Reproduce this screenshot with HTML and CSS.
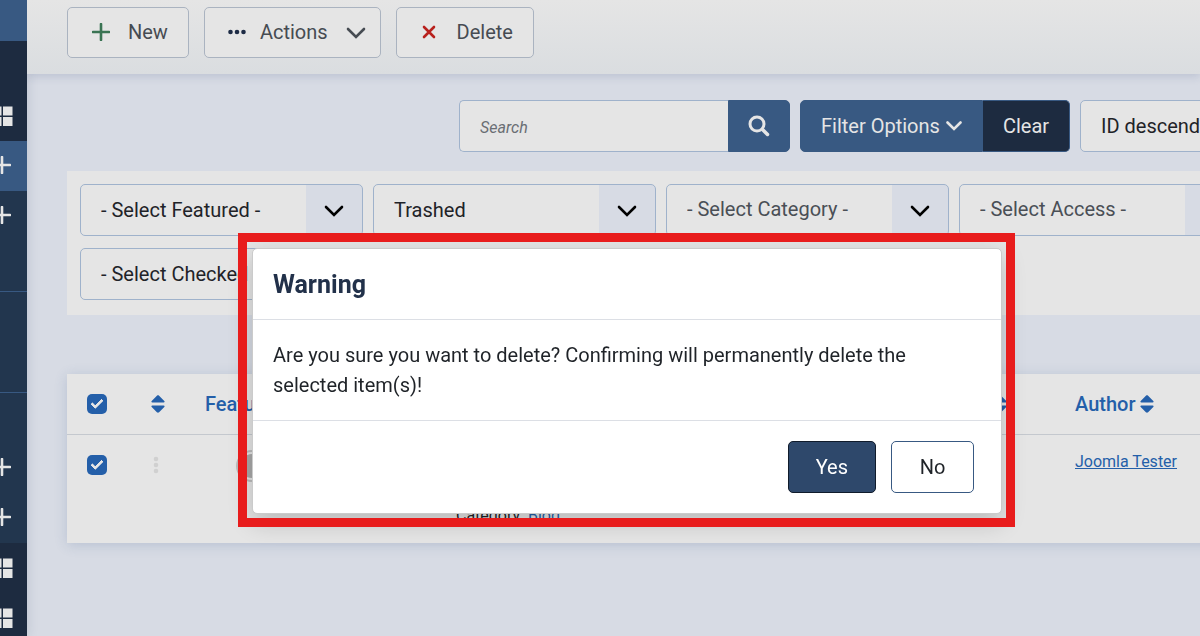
FILE: index.html
```html
<!DOCTYPE html>
<html lang="en">
<head>
    <meta charset="UTF-8">
    <meta name="viewport" content="width=device-width, initial-scale=1.0">
    <title>Articles</title>
    <link rel="stylesheet" href="styles.css">
</head>
<body>
    <!-- shared icons -->
    <svg class="sprite" width="0" height="0" aria-hidden="true">
        <symbol id="grid" viewBox="0 0 20 20">
            <path d="M0 .5h8.500V9.500H0zM10 .5h9.500v9H10zM0 11h8.500v9H0zM10 11h9.500v9H10z" fill="currentColor"/>
        </symbol>
        <symbol id="plus" viewBox="0 0 18 18">
            <path d="M9 1v16M1 9h16" fill="none" stroke="currentColor" stroke-width="2.600" stroke-linecap="round"/>
        </symbol>
        <symbol id="chevron" viewBox="0 0 20 12">
            <path d="M2 2l8 8 8-8" fill="none" stroke="currentColor" stroke-width="2.600" stroke-linecap="round"/>
        </symbol>
        <symbol id="sort" viewBox="0 0 14 18">
            <path d="M1.300 7.500h11.400c.9 0 1.200-.9.6-1.500L8.100.8C7.400.2 6.600.2 5.900.8L.7 6c-.6.6-.3 1.500.6 1.500zM1.300 10.500h11.400c.9 0 1.200.9.6 1.500l-5.200 5.200c-.7.6-1.500.6-2.200 0L.7 12c-.6-.6-.3-1.500.6-1.500z" fill="currentColor"/>
        </symbol>
    </svg>

    <div class="wrapper">
        <nav class="sidebar" aria-label="Main menu">
            <div class="side-head"></div>
            <div class="side-item dark"></div>
            <div class="side-item dark"><svg class="icon-grid"><use href="#grid"/></svg></div>
            <div class="side-item active"><svg class="icon-plus"><use href="#plus"/></svg></div>
            <div class="side-item"><svg class="icon-plus"><use href="#plus"/></svg></div>
            <div class="side-item"></div>
            <hr>
            <div class="side-item"></div>
            <div class="side-item"></div>
            <hr>
            <div class="side-item"></div>
            <div class="side-item"><svg class="icon-plus"><use href="#plus"/></svg></div>
            <div class="side-item"><svg class="icon-plus"><use href="#plus"/></svg></div>
            <div class="side-item dark"><svg class="icon-grid"><use href="#grid"/></svg></div>
            <div class="side-item dark"><svg class="icon-grid"><use href="#grid"/></svg></div>
        </nav>

        <main class="main">
            <div class="toolbar">
                <button class="tool" type="button">
                    <span class="tool-icon green"><svg width="18" height="18"><use href="#plus"/></svg></span>
                    New
                </button>
                <button class="tool tool-actions" type="button">
                    <span class="tool-icon navy">
                        <svg width="18" height="6" viewBox="0 0 18 6"><circle cx="2.500" cy="3" r="2.300"/><circle cx="9" cy="3" r="2.300"/><circle cx="15.500" cy="3" r="2.300"/></svg>
                    </span>
                    Actions
                    <svg class="chevron" width="20" height="12"><use href="#chevron"/></svg>
                </button>
                <button class="tool" type="button">
                    <span class="tool-icon red">
                        <svg width="14" height="14" viewBox="0 0 14 14"><path d="M2 2l10 10M12 2L2 12" fill="none" stroke="currentColor" stroke-width="2.600" stroke-linecap="round"/></svg>
                    </span>
                    Delete
                </button>
            </div>

            <div class="content">
                <div class="search-row">
                    <div class="group">
                        <input class="search" type="text" placeholder="Search" aria-label="Search">
                        <button class="btn btn-search" type="button" aria-label="Search">
                            <svg width="22" height="22" viewBox="0 0 22 22"><circle cx="9" cy="9" r="7" fill="none" stroke="currentColor" stroke-width="3"/><path d="M14.500 14.500l5 5" stroke="currentColor" stroke-width="3.500" stroke-linecap="round"/></svg>
                        </button>
                    </div>
                    <div class="group">
                        <button class="btn btn-filter" type="button">Filter Options
                            <svg width="16" height="10" viewBox="0 0 16 10"><path d="M1.500 1.500L8 8l6.500-6.500" fill="none" stroke="currentColor" stroke-width="2.600" stroke-linecap="round"/></svg>
                        </button>
                        <button class="btn btn-clear" type="button">Clear</button>
                    </div>
                    <select class="field order" aria-label="Sort by"><option>ID descending</option></select>
                </div>

                <div class="filters">
                    <div class="select">
                        <select class="field" aria-label="Featured"><option>- Select Featured -</option></select>
                        <svg><use href="#chevron"/></svg>
                    </div>
                    <div class="select">
                        <select class="field" aria-label="Status"><option>Trashed</option></select>
                        <svg><use href="#chevron"/></svg>
                    </div>
                    <div class="select">
                        <select class="field muted" aria-label="Category"><option>- Select Category -</option></select>
                        <svg><use href="#chevron"/></svg>
                    </div>
                    <div class="select">
                        <select class="field muted" aria-label="Access"><option>- Select Access -</option></select>
                        <svg><use href="#chevron"/></svg>
                    </div>
                    <div class="select">
                        <select class="field" aria-label="Checked out"><option>- Select Checked Out -</option></select>
                        <svg><use href="#chevron"/></svg>
                    </div>
                </div>

                <table class="articles">
                    <thead>
                        <tr>
                            <th class="col-check"><input type="checkbox" aria-label="Check all" checked></th>
                            <th class="col-order"><svg class="sort"><use href="#sort"/></svg></th>
                            <th class="col-featured">Featured</th>
                            <th class="col-title"></th>
                            <th class="col-access"><svg class="sort"><use href="#sort"/></svg></th>
                            <th>Author <svg class="sort"><use href="#sort"/></svg></th>
                        </tr>
                    </thead>
                    <tbody>
                        <tr>
                            <td class="col-check"><input type="checkbox" aria-label="Select article" checked></td>
                            <td class="col-order"><svg class="handle" width="6" height="18" viewBox="0 0 6 18"><circle cx="3" cy="3" r="2.300"/><circle cx="3" cy="9" r="2.300"/><circle cx="3" cy="15" r="2.300"/></svg></td>
                            <td class="featured"><svg width="32" height="32" viewBox="0 0 32 32"><circle cx="16" cy="16" r="15" fill="none" stroke="#bbbbbb" stroke-width="2"/><circle cx="16" cy="16" r="12" fill="#a9a9a9"/></svg></td>
                            <td class="title">Category: <a href="#">Blog</a></td>
                            <td></td>
                            <td class="author"><a href="#">Joomla Tester</a></td>
                        </tr>
                    </tbody>
                </table>
            </div>
        </main>
    </div>

    <div class="modal" role="dialog" aria-labelledby="modal-title">
        <header class="modal-header"><h3 id="modal-title">Warning</h3></header>
        <div class="modal-body">Are you sure you want to delete? Confirming will permanently delete the selected item(s)!</div>
        <footer class="modal-footer">
            <button class="modal-btn yes" type="button">Yes</button>
            <button class="modal-btn" type="button">No</button>
        </footer>
    </div>
</body>
</html>
```

FILE: styles.css
```css
*, *::before, *::after {
    box-sizing: border-box;
}
body {
    margin: 0;
    height: 100vh;
    overflow: hidden;
    background: #d7dbe4;
    font-family: Roboto, "Liberation Sans", sans-serif;
    font-size: 20px;
    line-height: 30px;
    color: #1f2328;
}
button, input, select {
    font: inherit;
    color: inherit;
}
a {
    color: #245fa9;
}
svg {
    flex: none;
}
.sprite {
    position: absolute;
}
.wrapper {
    display: flex;
    min-height: 100vh;
}

/* Sidebar */
.sidebar {
    flex: none;
    width: 27px;
    height: 100vh;
    overflow: hidden;
    background: #22364e;
    color: #e5e5e5;
    box-shadow: 0 0 12px rgba(30, 50, 90, 0.15);
}
.side-head {
    height: 41px;
    background: #385982;
}
.side-item {
    display: flex;
    justify-content: flex-end;
    align-items: center;
    height: 50px;
}
.side-item.dark {
    background: #1d2b40;
}
.side-item.active {
    background: #385982;
}
.sidebar hr {
    height: 1px;
    margin: 0;
    border: none;
    background: #385982;
}
.icon-grid {
    width: 20px;
    height: 20px;
    margin-right: 14px;
}
.icon-plus {
    width: 18px;
    height: 18px;
    margin: 0 16px 2px 0;
}

/* Toolbar */
.main {
    flex: 1;
    min-width: 0;
    overflow: hidden;
}
.toolbar {
    display: flex;
    gap: 15px;
    padding: 7px 40px 16px;
    background: linear-gradient(#e5e5e5, #dadde0);
    box-shadow: 0 3px 8px rgba(50, 70, 120, 0.15);
}
.tool {
    display: flex;
    align-items: center;
    gap: 15px;
    height: 51px;
    padding: 0 20px 2px;
    border: 1px solid #aab3c0;
    border-radius: 5px;
    background: #e5e5e5;
    color: #464b52;
}
.tool-actions {
    gap: 10px;
    padding-right: 14px;
}
.tool-icon {
    display: flex;
    justify-content: center;
    width: 25px;
}
.tool .chevron {
    margin: 3px 0 0 8px;
}
.green {
    color: #3a7453;
}
.navy {
    fill: #1d2b45;
}
.red {
    color: #b8211d;
}

/* Search row */
.content {
    margin-right: -80px;
    padding: 26px 0 0 40px;
}
.search-row {
    display: flex;
    justify-content: flex-end;
    gap: 10px;
    margin-bottom: 19px;
}
.group {
    display: flex;
}
.search {
    width: 269px;
    height: 52px;
    padding: 2px 20px 0;
    border: 1px solid #9fb2cb;
    border-right: none;
    border-radius: 5px 0 0 5px;
    background: #e5e5e5;
    font-size: 16px;
}
.search::placeholder {
    color: #6a6e74;
    font-style: italic;
}
.btn {
    display: flex;
    align-items: center;
    height: 52px;
    padding: 0 20px;
    border: 1px solid #385982;
    background: #385982;
    color: #e5e5e5;
    white-space: nowrap;
}
.btn-search {
    justify-content: center;
    width: 62px;
    border-radius: 0 5px 5px 0;
}
.btn-filter {
    gap: 6px;
    width: 183px;
    border-radius: 5px 0 0 5px;
}
.btn-clear {
    justify-content: center;
    width: 87px;
    border-left: none;
    border-radius: 0 5px 5px 0;
    background: #1d2b40;
}
.field {
    width: 100%;
    height: 52px;
    padding: 0 60px 0 20px;
    border: 1px solid #9fb2cb;
    border-radius: 5px;
    background: linear-gradient(#d7dbe4, #d7dbe4) right / 56px 100% no-repeat #e5e5e5;
    appearance: none;
}
.order {
    width: 200px;
    padding-right: 20px;
    background: #e5e5e5;
}
.muted {
    padding-bottom: 2px;
    color: #4a4f56;
}

/* Filters */
.filters {
    display: grid;
    grid-template-columns: repeat(4, 283px);
    gap: 12px 10px;
    padding: 13px 13px 15px;
    background: #e5e5e5;
}
.select {
    position: relative;
    height: 52px;
}
.select svg {
    position: absolute;
    top: 21px;
    right: 19px;
    width: 20px;
    height: 12px;
    color: #000;
    pointer-events: none;
}

/* Articles */
.articles {
    width: 100%;
    margin-top: 59px;
    border-spacing: 0;
    table-layout: fixed;
    background: #e5e5e5;
    box-shadow: 0 2px 12px rgba(60, 90, 140, 0.2);
}
.articles th {
    height: 61px;
    padding: 0 0 0 15px;
    border-bottom: 1px solid #c4c8ce;
    text-align: left;
    font-weight: 500;
    color: #245fa9;
}
.articles td {
    height: 108px;
    padding: 15px 0 0 15px;
    vertical-align: top;
}
.articles .col-check {
    width: 60px;
    padding-left: 20px;
}
.articles .col-order {
    width: 63px;
    padding-left: 24px;
}
.col-featured {
    width: 251px;
}
.col-title {
    width: 544px;
}
.articles .col-access {
    width: 75px;
    padding-left: 8px;
}
.articles input {
    display: block;
    width: 20px;
    height: 20px;
    margin: 0;
    border-radius: 5px;
    background: #245fa9;
    appearance: none;
}
.articles td input {
    margin-top: 5px;
}
.articles input::before {
    content: "";
    display: block;
    width: 12px;
    height: 7px;
    margin: 5px 4px;
    border: solid #e5e5e5;
    border-width: 0 0 3px 3px;
    border-radius: 1px;
    transform: rotate(-45deg);
}
.sort {
    width: 14px;
    height: 18px;
    vertical-align: -2px;
}
.handle {
    display: block;
    margin: 6px 0 0 2px;
    fill: #d0d0d0;
}
.articles .featured {
    padding-left: 46px;
}
.articles .title {
    padding-bottom: 12px;
    vertical-align: bottom;
    font-size: 16px;
}
.articles .author {
    padding-top: 12px;
    font-size: 16px;
}
.title a {
    text-decoration: none;
}

/* Modal */
.modal {
    position: fixed;
    top: 248px;
    left: 252px;
    width: 750px;
    border: 1px solid #cbcbcb;
    border-radius: 5px;
    background: #fff;
    background-clip: padding-box;
    box-shadow: 0 8px 24px rgba(0, 0, 0, 0.2);
}
.modal::after {
    content: "";
    position: absolute;
    inset: -16px -14px -14px -15px;
    border: 9px solid #e81c1c;
    pointer-events: none;
}
.modal-header {
    padding: 21px 20px 19px;
    border-bottom: 1px solid #dcdfe5;
}
.modal-header h3 {
    margin: 0;
    font-size: 25px;
    font-weight: 700;
    color: #22314a;
}
.modal-body {
    padding: 20px;
}
.modal-footer {
    display: flex;
    justify-content: flex-end;
    gap: 15px;
    padding: 20px 27px;
    border-top: 1px solid #dcdfe5;
}
.modal-btn {
    min-width: 83px;
    height: 52px;
    padding: 0 27px;
    border: 1px solid #385982;
    border-radius: 5px;
    background: #fff;
}
.modal-btn.yes {
    border-color: #101b2b;
    background: #2e486b;
    color: #fff;
}
```
